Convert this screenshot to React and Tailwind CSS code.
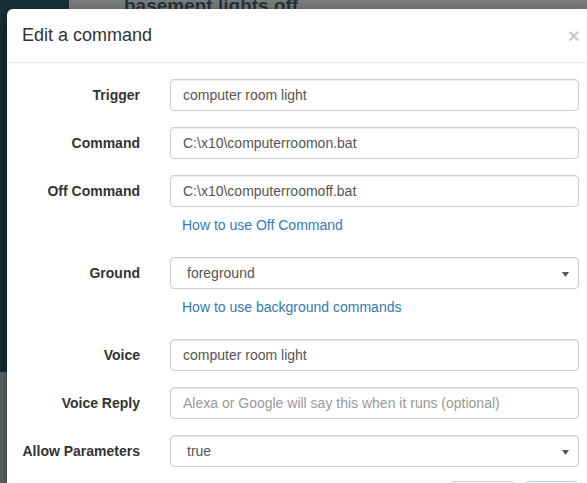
import React from "react";

const Caret = () => (
  <svg width="7" height="5" viewBox="0 0 7 5" className="absolute right-[9px] top-[14px]">
    <path d="M0 0 L7 0 L3.5 5 Z" fill="#555" />
  </svg>
);

const Row = ({ label, children, help, last }) => (
  <div className={`flex ${help ? "mb-[22px]" : last ? "mb-[14px]" : "mb-[16px]"}`}>
    <div className="w-[133px] pr-[15px] h-[32px] flex items-center justify-end">
      <span className="text-[14px] font-bold text-[#333] whitespace-nowrap">{label}</span>
    </div>
    <div className="flex-1 pl-[15px]">
      {children}
      {help && (
        <div className="mt-[8px] h-[20px] leading-[20px] pl-[12px]">
          <a className="text-[14px] text-[#337ab7]">{help}</a>
        </div>
      )}
    </div>
  </div>
);

const Input = ({ value, placeholder }) => (
  <div className="h-[32px] border border-[#ccc] rounded-[4px] shadow-[inset_0_1px_1px_rgba(0,0,0,0.075)] px-[12px] flex items-center text-[14px] bg-white">
    {value ? (
      <span className="text-[#555]">{value}</span>
    ) : (
      <span className="text-[#999]">{placeholder}</span>
    )}
  </div>
);

const Select = ({ value }) => (
  <div className="relative h-[32px] border border-[#ccc] rounded-[4px] shadow-[inset_0_1px_1px_rgba(0,0,0,0.075)] pl-[16px] flex items-center text-[14px] bg-white">
    <span className="text-[#555]">{value}</span>
    <Caret />
  </div>
);

export default function App() {
  return (
    <div className="relative w-[587px] h-[483px] overflow-hidden font-['Liberation_Sans',Arial,sans-serif]">
      {/* page behind the backdrop */}
      <div className="flex h-full">
        <div className="w-[69px] flex flex-col">
          <div className="h-[372px] bg-[#163237]" />
          <div className="flex-1 bg-[#5e6a6a]" />
        </div>
        <div className="flex-1 bg-[#7b7d7d] pl-[55px]">
          <div className="mt-[-4px] text-[19px] font-bold text-[#263537] leading-[19px]">
            basement lights off
          </div>
        </div>
      </div>

      {/* modal */}
      <div className="absolute left-[7px] top-[9px] w-[587px] h-[500px] bg-white rounded-[6px] shadow-[0_5px_15px_rgba(0,0,0,0.5)]">
        <div className="h-[54px] border-b border-[#e5e5e5] flex items-center justify-between pl-[15px] pr-[15px]">
          <h4 className="text-[18px] text-[#333]">Edit a command</h4>
          <span className="text-[21px] font-bold leading-none text-[#000] opacity-20 mr-[-1px]">×</span>
        </div>
        <div className="px-[15px] pt-[16px]">
          <Row label="Trigger">
            <Input value="computer room light" />
          </Row>
          <Row label="Command">
            <Input value="C:\x10\computerroomon.bat" />
          </Row>
          <Row label="Off Command" help="How to use Off Command">
            <Input value="C:\x10\computerroomoff.bat" />
          </Row>
          <Row label="Ground" help="How to use background commands">
            <Select value="foreground" />
          </Row>
          <Row label="Voice">
            <Input value="computer room light" />
          </Row>
          <Row label="Voice Reply">
            <Input placeholder="Alexa or Google will say this when it runs (optional)" />
          </Row>
          <Row label="Allow Parameters" last>
            <Select value="true" />
          </Row>
          <div className="flex justify-end gap-[10px] pr-[1px]">
            <button className="w-[66px] h-[34px] border border-[#ccc] rounded-[4px] bg-white" />
            <button className="w-[53px] h-[34px] border border-[#9fd0ea] rounded-[4px] bg-white" />
          </div>
        </div>
      </div>
    </div>
  );
}
